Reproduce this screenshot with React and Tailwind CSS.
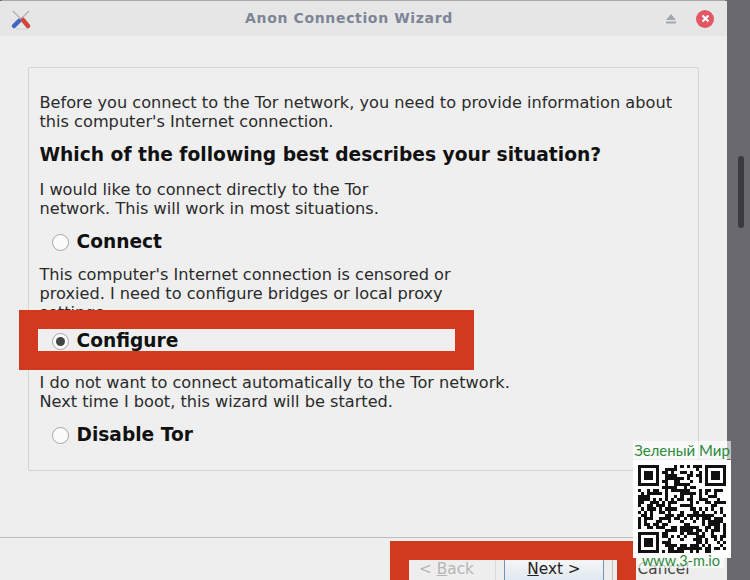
import React from 'react';

const font = { fontFamily: '"DejaVu Sans", sans-serif' };
const markFont = { fontFamily: 'Lato, "Liberation Sans", sans-serif' };

function Radio({ label, checked }) {
  return (
    <label className="flex items-center h-[24px] pl-[12px] gap-[8px]">
      <span className="w-[17px] h-[17px] rounded-full border border-[#a5a5a5] bg-[#fafafa] flex items-center justify-center">
        {checked && <span className="w-[9px] h-[9px] rounded-full bg-[#444]" />}
      </span>
      <span className="text-[18.6px] font-bold text-[#111] leading-[24px]">{label}</span>
    </label>
  );
}

function ToolsIcon() {
  return (
    <svg width="24" height="24" viewBox="0 0 24 24">
      <path d="M4 4 L15 15" stroke="#b4b4b4" strokeWidth="1.5" />
      <path d="M20 4 L9 15" stroke="#b4b4b4" strokeWidth="1.5" />
      <path d="M10 14 L5 19" stroke="#3f67c4" strokeWidth="4.5" strokeLinecap="round" />
      <path d="M14 13 L19 19" stroke="#d2453c" strokeWidth="4.5" strokeLinecap="round" />
      <path d="M7 22 H18" stroke="#cfcfcf" strokeWidth="1" />
    </svg>
  );
}

// finder pattern + pseudo random modules, looks like the watermark's code
function Qr() {
  const n = 29;
  const cells = [];
  let seed = 77;
  for (let y = 0; y < n; y++) {
    for (let x = 0; x < n; x++) {
      seed = (seed * 1103515245 + 12345) & 0x7fffffff;
      const inFinder = (x < 8 && y < 8) || (x > n - 9 && y < 8) || (x < 8 && y > n - 9);
      if (!inFinder && (seed >> 16) % 100 < 56) cells.push(<rect key={x + '-' + y} x={x} y={y} width="1" height="1" />);
    }
  }
  const finder = (x, y) => (
    <g key={x + '_' + y}>
      <path d={`M${x} ${y}h7v7h-7z M${x + 1} ${y + 1}v5h5v-5z`} fillRule="evenodd" />
      <rect x={x + 2} y={y + 2} width="3" height="3" />
    </g>
  );
  return (
    <svg width="88" height="88" viewBox="0 0 29 29" fill="#111" shapeRendering="crispEdges">
      {cells}
      {finder(0, 0)}
      {finder(22, 0)}
      {finder(0, 22)}
    </svg>
  );
}

export default function App() {
  return (
    <div className="relative w-[750px] h-[580px] overflow-hidden bg-[#69696f] text-[#2a2a2a]" style={font}>
      <div className="w-[727px] h-[580px] bg-[#eeeeee] rounded-t-[4px] border-t border-[#a9a9ab] flex flex-col">
        {/* title bar */}
        <div className="h-[35px] shrink-0 bg-[#e6e6e7] flex items-center px-[9px]">
          <ToolsIcon />
          <div className="flex-1 text-center text-[14px] font-bold text-[#7d8595] tracking-[0.65px]">Anon Connection Wizard</div>
          <svg width="12" height="10" viewBox="0 0 12 10" className="mr-[19px]">
            <path d="M6 0 L11 6 H1 Z M1 7.5 H11 V9.5 H1 Z" fill="#a3a7b0" />
          </svg>
          <span className="w-[18px] h-[18px] mr-[4px] rounded-full bg-[#e25763] flex items-center justify-center">
            <svg width="9" height="9" viewBox="0 0 9 9">
              <path d="M1.5 1.5 L7.5 7.5 M7.5 1.5 L1.5 7.5" stroke="#fff" strokeWidth="2.2" />
            </svg>
          </span>
        </div>

        {/* wizard page */}
        <div className="flex-1 flex flex-col px-[28px] pt-[31px]">
          <div className="h-[404px] shrink-0 border border-[#d4d4d4] rounded-[2px] bg-[#efefef] px-[10.5px] pt-[25px] text-[16.17px] leading-[19px] overflow-hidden">
            <p>Before you connect to the Tor network, you need to provide information about<br />this computer's Internet connection.</p>
            <h2 className="mt-[12px] text-[18.66px] leading-[24px] font-bold text-[#111]">Which of the following best describes your situation?</h2>
            <p className="mt-[13px]">I would like to connect directly to the Tor<br />network. This will work in most situations.</p>
            <div className="mt-[12px]"><Radio label="Connect" /></div>
            <p className="mt-[11px]">This computer's Internet connection is censored or<br />proxied. I need to configure bridges or local proxy<br />settings.</p>
            <div className="mt-[7px]"><Radio label="Configure" checked /></div>
            <p className="mt-[20px]">I do not want to connect automatically to the Tor network.<br />Next time I boot, this wizard will be started.</p>
            <div className="mt-[12px]"><Radio label="Disable Tor" /></div>
          </div>
        </div>

        {/* footer */}
        <div className="h-[43px] shrink-0 border-t border-[#bdbdbd] flex justify-end gap-[8px] pr-[13px] pt-[22px] text-[15.3px] leading-[19px]">
          <span className="w-[100px] h-[30px] text-center text-[#b5b5b5] border-r border-[#d8d8d8] pl-[2px]">&lt; <u>B</u>ack</span>
          <span className="w-[100px] h-[30px] text-center text-[#222] border-x border-[#6f93b8] bg-gradient-to-b from-[#f6f6f6] to-[#d5e2ee]"><u>N</u>ext &gt;</span>
          <span className="w-[102px] h-[30px] text-center text-[#444] border-l border-[#c4c4c4]">Cancel</span>
        </div>
      </div>

      {/* scrollbar of the page behind */}
      <div className="absolute left-[738px] top-[156px] w-[6px] h-[72px] rounded-full bg-[#3a3a40]" />

      {/* red annotation frames */}
      <div className="absolute left-[19px] top-[310px] w-[455px] h-[60px] border-[19px] border-[#d13a1e]" />
      <div className="absolute left-[390px] top-[541px] w-[246px] h-[39px] border-x-[19px] border-t-[19px] border-[#d13a1e]" />

      {/* watermark */}
      <div className="absolute left-[633px] top-[441px] w-[98px] flex flex-col items-center">
        <div className="w-full whitespace-nowrap bg-white/60 text-center text-[15px] leading-[18px] text-[#2c8a3c]" style={markFont}>Зеленый Мир</div>
        <div className="bg-white p-[5px] mt-[1px] w-[98px] h-[98px] flex items-center justify-center"><Qr /></div>
      </div>
      <div className="absolute left-[638px] top-[553px] w-[86px] whitespace-nowrap bg-white/70 text-center text-[14.5px] leading-[15px] text-[#2c8a3c]" style={markFont}>www.3-m.io</div>
    </div>
  );
}
